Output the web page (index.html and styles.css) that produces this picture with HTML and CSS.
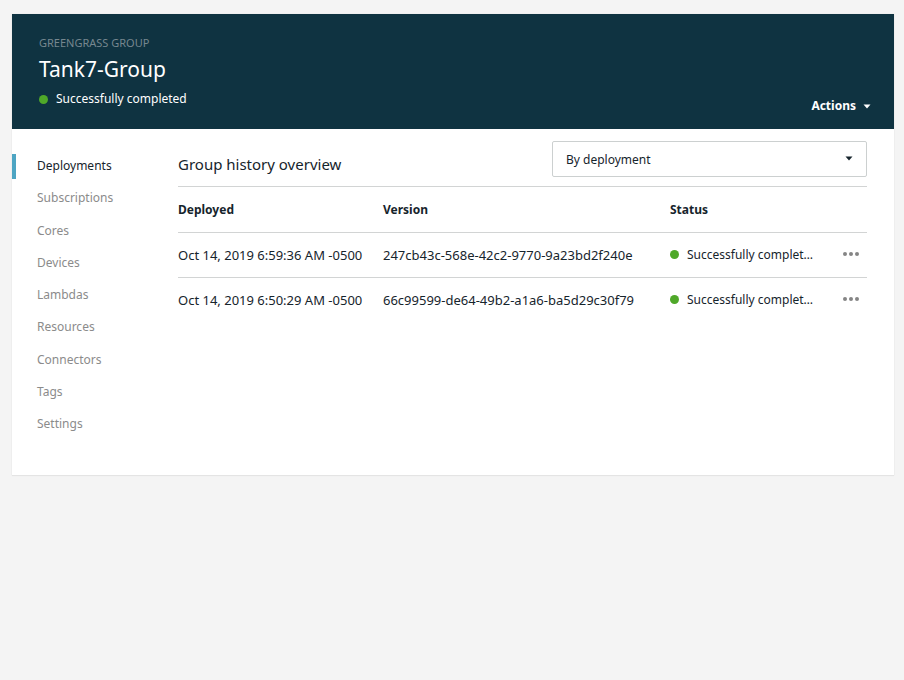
FILE: index.html
```html
<!DOCTYPE html>
<html lang="en">
<head>
<meta charset="utf-8">
<title>Tank7-Group</title>
<link rel="stylesheet" href="styles.css">
</head>
<body>
<div class="card">
  <header class="banner">
    <div>
      <p class="kicker">GREENGRASS GROUP</p>
      <h1 class="title">Tank7-Group</h1>
      <p class="state"><span class="dot"></span>Successfully completed</p>
    </div>
    <button class="actions" type="button">Actions
      <svg class="caret" viewBox="0 0 8 5" aria-hidden="true"><path d="M0.5 0.5h7L4 4.5z" fill="currentColor"/></svg>
    </button>
  </header>
  <div class="body">
    <nav class="nav">
      <a class="link current" href="#deployments">Deployments</a>
      <a class="link" href="#subscriptions">Subscriptions</a>
      <a class="link" href="#cores">Cores</a>
      <a class="link" href="#devices">Devices</a>
      <a class="link" href="#lambdas">Lambdas</a>
      <a class="link" href="#resources">Resources</a>
      <a class="link" href="#connectors">Connectors</a>
      <a class="link" href="#tags">Tags</a>
      <a class="link" href="#settings">Settings</a>
    </nav>
    <main class="main">
      <div class="toolbar">
        <h2 class="heading">Group history overview</h2>
        <div class="picker">
          <select class="select" aria-label="Group history view">
            <option>By deployment</option>
          </select>
          <svg class="caret picker-caret" viewBox="0 0 8 5" aria-hidden="true"><path d="M0.5 0.5h7L4 4.5z" fill="currentColor"/></svg>
        </div>
      </div>
      <table class="history">
        <colgroup><col class="col-date"><col class="col-version"><col><col class="col-menu"></colgroup>
        <thead>
          <tr><th>Deployed</th><th>Version</th><th>Status</th><td></td></tr>
        </thead>
        <tbody>
          <tr>
            <td class="value">Oct 14, 2019 6:59:36 AM -0500</td>
            <td class="value">247cb43c-568e-42c2-9770-9a23bd2f240e</td>
            <td><span class="status"><span class="dot"></span>Successfully complet…</span></td>
            <td><button class="more" type="button" aria-label="More"><svg viewBox="0 0 16 4" aria-hidden="true"><circle cx="2" cy="2" r="2"/><circle cx="8" cy="2" r="2"/><circle cx="14" cy="2" r="2"/></svg></button></td>
          </tr>
          <tr>
            <td class="value">Oct 14, 2019 6:50:29 AM -0500</td>
            <td class="value">66c99599-de64-49b2-a1a6-ba5d29c30f79</td>
            <td><span class="status"><span class="dot"></span>Successfully complet…</span></td>
            <td><button class="more" type="button" aria-label="More"><svg viewBox="0 0 16 4" aria-hidden="true"><circle cx="2" cy="2" r="2"/><circle cx="8" cy="2" r="2"/><circle cx="14" cy="2" r="2"/></svg></button></td>
          </tr>
        </tbody>
      </table>
    </main>
  </div>
</div>
</body>
</html>
```
FILE: styles.css
```css
* { box-sizing: border-box; }

body {
  margin: 0;
  padding: 14px 10px 14px 12px;
  background: #f4f4f4;
  color: #16242c;
  font: 12px/20px "Noto Sans", "Open Sans", sans-serif;
}

h1, h2, p { margin: 0; font-weight: 400; }

button, select { font: inherit; color: inherit; }

button { padding: 0; border: 0; background: none; cursor: pointer; }

.card {
  background: #fff;
  box-shadow: 0 1px 1px #e4e4e4, 0 0 1px #dcdcdc;
}

.banner {
  display: flex;
  justify-content: space-between;
  align-items: flex-end;
  padding: 20px 23px 13px 27px;
  background: #0f3341;
  color: #fff;
}

.kicker { color: #76878f; font-size: 11px; line-height: 18px; }

.title { font-size: 21px; line-height: 34px; }

.state, .status { display: flex; align-items: center; gap: 8px; }

.state { padding: 3px 0 7px; }

.dot {
  flex: none;
  width: 9px;
  height: 9px;
  border-radius: 50%;
  background: #4fa829;
}

.actions {
  display: flex;
  align-items: center;
  gap: 7px;
  font-weight: 700;
}

.caret { display: block; width: 8px; height: 5px; }

.body { display: flex; min-height: 346px; }

.nav {
  flex: none;
  display: flex;
  flex-direction: column;
  justify-content: space-between;
  width: 166px;
  padding: 25px 0 38px;
}

.link {
  padding: 0 0 2px 21px;
  border-left: 4px solid transparent;
  color: #8b8b8b;
  line-height: 23px;
  text-decoration: none;
}

.current { border-color: #4da5c3; color: #16242c; }

.main { flex: 1; min-width: 0; padding: 12px 27px 24px 0; }

.toolbar {
  display: flex;
  justify-content: space-between;
  padding-bottom: 9px;
  border-bottom: 1px solid #d2d4d4;
}

.heading { font-size: 15px; line-height: 46px; height: 36px; }

.picker { position: relative; width: 315px; }

.select {
  width: 100%;
  height: 36px;
  padding: 2px 13px 0;
  appearance: none;
  border: 1px solid #ccd0d0;
  border-radius: 2px;
  background: #fff;
}

.picker-caret {
  position: absolute;
  top: 15px;
  right: 14px;
  pointer-events: none;
}

.history { width: 100%; table-layout: fixed; border-collapse: collapse; }

.col-date { width: 205px; }
.col-version { width: 287px; }
.col-menu { width: 32px; }

.history th, .history td {
  height: 45px;
  padding: 0;
  text-align: left;
  white-space: nowrap;
}

.history th { padding-top: 2px; }

.history .value { font-size: 13px; }

.history tbody tr { border-top: 1px solid #d2d4d4; }

.more { display: block; width: 16px; margin-left: 8px; padding-bottom: 2px; }

.more svg { display: block; width: 16px; height: 4px; fill: #858585; }
```
